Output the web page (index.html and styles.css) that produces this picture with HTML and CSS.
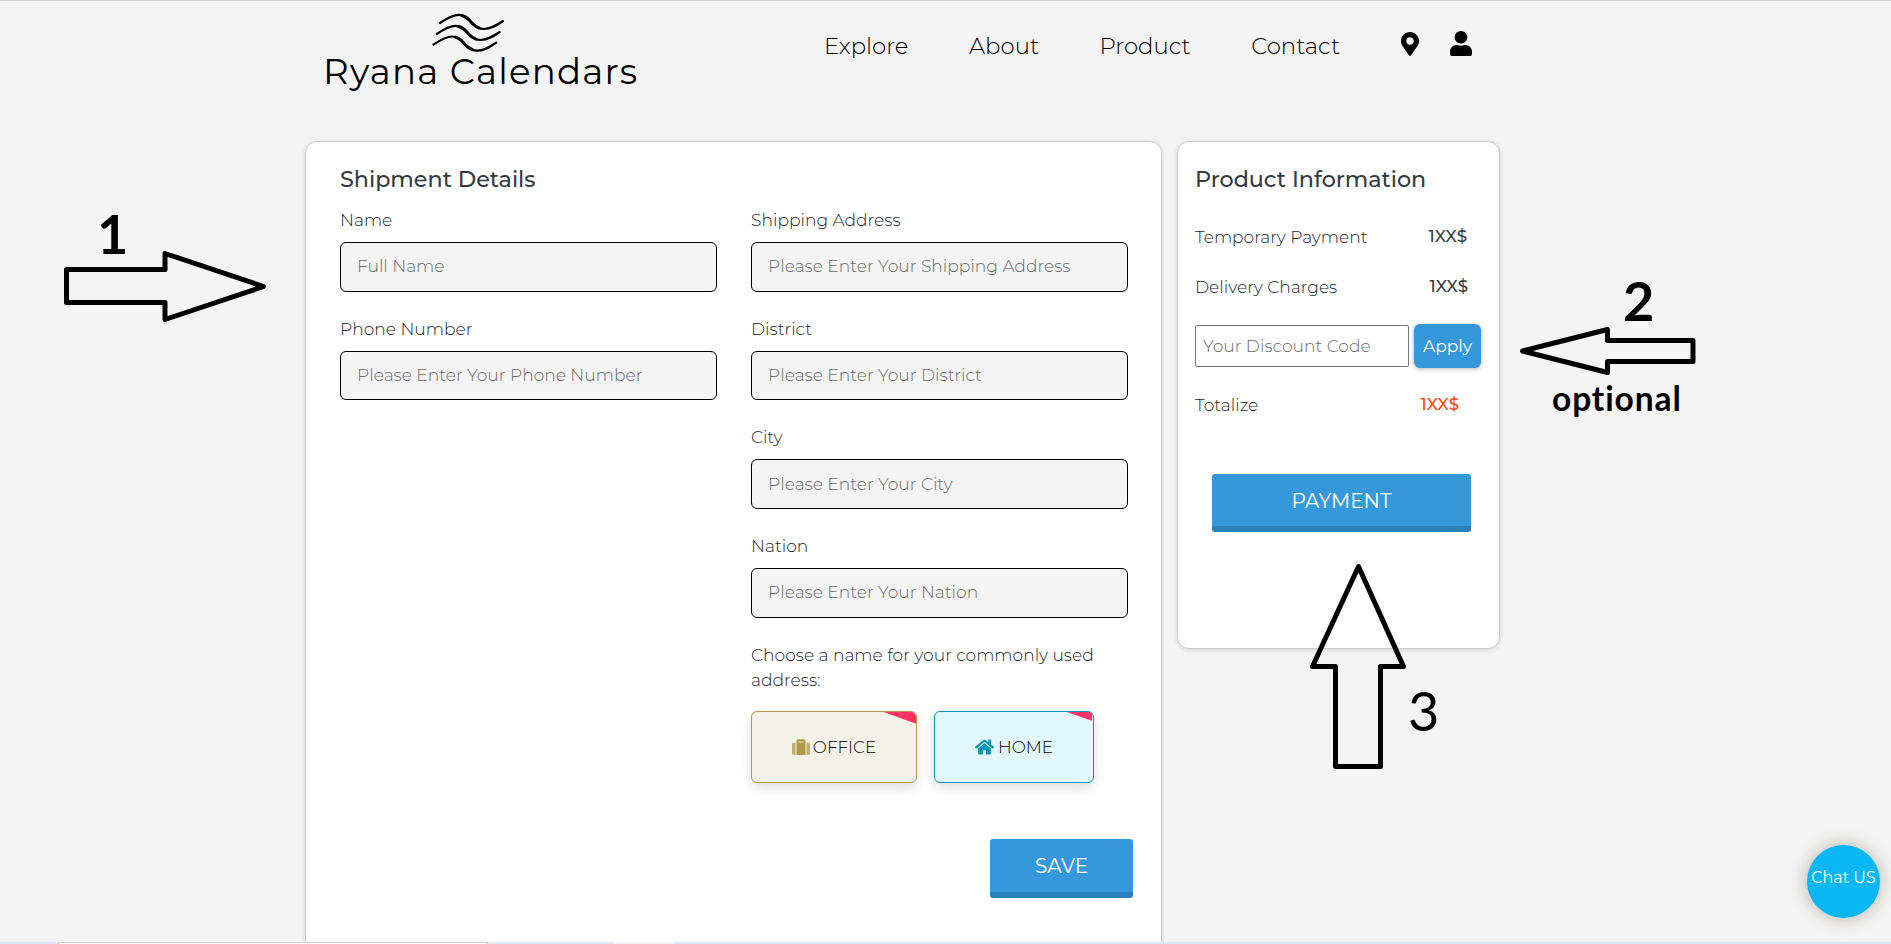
FILE: index.html
```
<!DOCTYPE html>
<html lang="en">
<head>
<meta charset="utf-8">
<title>Ryana Calendars - Shipment</title>
<link rel="stylesheet" href="styles.css">
</head>
<body>
<div class="page">
  <header class="header">
    <a class="logo">
      <svg class="logo-waves" width="74" height="42" viewBox="0 0 74 42">
        <defs>
          <g id="wave" fill="none" stroke="#000" stroke-linecap="round">
            <path stroke-width="2.200" d="M8 10C16 4.500 22 1.800 27 1.800C34 1.800 37 6.500 39.500 9.500C43 13.500 47 16 52 16C59 16 65 12 71 8"/>
            <path stroke-width="2.900" d="M30 2.500C35 4 37 6.500 39.500 9.500C42 12.500 44 14 47 15"/>
          </g>
        </defs>
        <use href="#wave"/>
        <use href="#wave" x="-3.300" y="11"/>
        <use href="#wave" x="-6.600" y="21.700"/>
      </svg>
      <span class="logo-name">Ryana Calendars</span>
    </a>
    <nav class="nav">
      <a>Explore</a><a>About</a><a>Product</a><a>Contact</a>
    </nav>
    <div class="header-icons">
      <svg width="18" height="24" viewBox="0 0 384 512"><path d="M172.300 501.700C27 291 0 269.400 0 192 0 86 86 0 192 0s192 86 192 192c0 77.400-27 99-172.300 309.700-9.500 13.800-29.900 13.800-39.400 0zM192 272c44.200 0 80-35.800 80-80s-35.800-80-80-80-80 35.800-80 80 35.800 80 80 80z"/></svg>
      <svg width="22" height="25" viewBox="0 0 448 512" preserveAspectRatio="none"><path d="M224 256c70.700 0 128-57.300 128-128S294.700 0 224 0 96 57.300 96 128s57.300 128 128 128zm89.600 32h-16.700c-22.200 10.200-46.900 16-72.900 16s-50.600-5.800-72.900-16h-16.700C60.200 288 0 348.200 0 422.400V464c0 26.500 21.500 48 48 48h352c26.500 0 48-21.500 48-48v-41.600c0-74.200-60.200-134.400-134.400-134.400z"/></svg>
    </div>
  </header>

  <main class="main">
    <section class="card shipment">
      <h2 class="title">Shipment Details</h2>
      <div class="columns">
        <div class="column">
          <label class="field"><span>Name</span><input class="input" placeholder="Full Name"></label>
          <label class="field"><span>Phone Number</span><input class="input" placeholder="Please Enter Your Phone Number"></label>
        </div>
        <div class="column">
          <label class="field"><span>Shipping Address</span><input class="input" placeholder="Please Enter Your Shipping Address"></label>
          <label class="field"><span>District</span><input class="input" placeholder="Please Enter Your District"></label>
          <label class="field"><span>City</span><input class="input" placeholder="Please Enter Your City"></label>
          <label class="field"><span>Nation</span><input class="input" placeholder="Please Enter Your Nation"></label>
          <div class="place">
            <p class="place-text">Choose a name for your commonly used address:</p>
            <div class="place-options">
              <button class="option office">
                <svg width="18" height="16" viewBox="0 0 512 448"><path fill-rule="evenodd" d="M128 448V48c0-26.500 21.500-48 48-48H336c26.500 0 48 21.500 48 48v400zM192 64v32h128V64z"/><path opacity=".75" d="M48 96h52v352H48c-26.500 0-48-21.500-48-48V144c0-26.500 21.500-48 48-48zM412 96h52c26.500 0 48 21.500 48 48v256c0 26.500-21.500 48-48 48h-52z"/></svg>
                OFFICE
              </button>
              <button class="option home">
                <svg width="19" height="16" viewBox="0 0 576 480"><path d="M280.400 132.300L96 284.100V448a16 16 0 0 0 16 16l112-.300a16 16 0 0 0 16-16V352a16 16 0 0 1 16-16h64a16 16 0 0 1 16 16v95.600a16 16 0 0 0 16 16.100L464 464a16 16 0 0 0 16-16V284L295.700 132.300a12.200 12.200 0 0 0-15.300 0zM571.600 235.500L488 166.600V28a12 12 0 0 0-12-12h-56a12 12 0 0 0-12 12v72.600L318.500 27a48 48 0 0 0-61 0L4.300 235.500a12 12 0 0 0-1.600 16.900l25.500 31A12 12 0 0 0 45.200 285L280.400 91.200a12.200 12.200 0 0 1 15.300 0L530.900 285a12 12 0 0 0 16.900-1.600l25.500-31a12 12 0 0 0-1.700-16.900z"/></svg>
                HOME
              </button>
            </div>
          </div>
        </div>
      </div>
      <button class="button save">SAVE</button>
    </section>

    <aside class="card product">
      <h2 class="title">Product Information</h2>
      <div class="row row-temporary"><span>Temporary Payment</span><b>1XX$</b></div>
      <div class="row row-delivery"><span>Delivery Charges</span><b>1XX$</b></div>
      <div class="discount"><input class="code" placeholder="Your Discount Code"><button class="apply">Apply</button></div>
      <div class="row row-total"><span>Totalize</span><b>1XX$</b></div>
      <button class="button payment">PAYMENT</button>
    </aside>
  </main>

  <svg class="arrows" width="1891" height="944" viewBox="0 0 1891 944">
    <g fill="none" stroke="#000" stroke-width="5" stroke-linejoin="round">
      <path d="M66.500 269.500H165V253.500L263.500 286.500L165 319.500V302.500H66.500Z"/>
      <path d="M1522.500 351L1607.500 329.500V340.500H1693V361.500H1607.500V372.500Z"/>
      <path d="M1358.500 566.500L1312.500 666.500H1335.500V766.500H1380.500V666.500H1403.500Z"/>
    </g>
  </svg>
  <span class="note note-one">1</span>
  <span class="note note-two">2</span>
  <span class="note note-optional">optional</span>
  <span class="note note-three">3</span>

  <button class="chat">Chat US</button>
  <div class="taskbar"><span class="taskbar-tab"></span><span class="taskbar-item"></span></div>
</div>
</body>
</html>
```
FILE: styles.css
```
* { box-sizing: border-box; }

body {
  margin: 0;
  background: #f4f4f4;
  color: #212529;
  font: 300 17.1px/25px Montserrat, "Open Sans", sans-serif;
}

button, input { font: inherit; margin: 0; }

.page {
  position: relative;
  width: 1891px;
  height: 944px;
  overflow: hidden;
  border-top: 1px solid #ccc;
}

/* Header */
.header {
  display: flex;
  align-items: flex-start;
  height: 140px;
  padding-left: 323px;
  color: #000;
}

.logo {
  display: flex;
  flex-direction: column;
  width: 316px;
  padding-top: 12px;
}

.logo-waves { margin-left: 109px; overflow: visible; }

.logo-name {
  margin-top: -3px;
  font-size: 35.6px;
  font-weight: 400;
  line-height: 40px;
  letter-spacing: 1.2px;
  white-space: nowrap;
}

.nav {
  display: flex;
  gap: 60.6px;
  padding: 30px 0 0 185px;
  font-size: 22.8px;
  line-height: 30px;
}

.header-icons {
  display: flex;
  align-items: center;
  gap: 31px;
  padding: 30px 0 0 61px;
}

/* Cards */
.main {
  display: flex;
  align-items: flex-start;
  gap: 15px;
  padding-left: 305px;
}

.card {
  border: 1px solid #ccc;
  border-radius: 12px;
  background: #fff;
  box-shadow: 0 1px 5px rgba(0, 0, 0, .14);
}

.shipment {
  width: 857px;
  height: 900px;
  padding: 21px 33px 0 34px;
}

.product {
  width: 323px;
  height: 508px;
  padding: 21px 17px 0;
}

.title {
  margin: 0;
  color: #343a40;
  font-size: 22.25px;
  font-weight: 500;
  line-height: 32px;
}

/* Shipment form */
.columns {
  display: flex;
  gap: 34px;
  padding-top: 12px;
}

.column {
  display: flex;
  flex-direction: column;
  gap: 24px;
  width: 377px;
}

.field {
  display: flex;
  flex-direction: column;
  gap: 10px;
}

.input {
  width: 100%;
  height: 49.7px;
  padding: 0 16px 2px;
  border: 1px solid #000;
  border-radius: 6px;
  background: #f4f4f4;
}

.input::placeholder, .code::placeholder { color: #6a6a6a; opacity: 1; }

.place-text { margin: 0 0 19px; }

.place-options { display: flex; gap: 17px; }

.option {
  position: relative;
  display: flex;
  align-items: center;
  justify-content: center;
  height: 72px;
  padding: 1px 0 0;
  border: 1px solid;
  border-radius: 6px;
  overflow: hidden;
  box-shadow: 0 5px 12px rgba(0, 0, 0, .13);
  color: #000;
  font-size: 16.8px;
}

.option svg { margin-right: 3px; }

.option::after {
  content: "";
  position: absolute;
  top: 0;
  right: 0;
  background: #ff3366;
  clip-path: polygon(0 0, 100% 0, 100% 100%);
}

.office { width: 166px; border-color: #af984c; background: #f4f1e8; }
.office svg { fill: #af984c; }
.office::after { width: 33px; height: 12px; }

.home { width: 160px; border-color: #0095b7; background: #e1f8ff; }
.home svg { margin-right: 4px; fill: #0095b7; }
.home::after { right: 1px; width: 26px; height: 9px; }

.button {
  display: block;
  padding: 2px 0 0;
  border: 0;
  border-bottom: 6px solid #2980b9;
  border-radius: 3px;
  background: #3498db;
  color: #fff;
  font-size: 20.1px;
  font-weight: 400;
}

.save {
  width: 143px;
  height: 59px;
  margin: 56px 0 0 650px;
}

/* Product card */
.row {
  display: flex;
  justify-content: space-between;
}

.row b { color: #343a40; font-size: 16.7px; font-weight: 500; }
.row-temporary { padding: 29px 15px 0 0; }
.row-delivery { padding: 25px 14px 0 0; }
.row-total { padding: 24px 23px 0 0; }
.row-total b { color: #ff4500; }

.discount {
  display: flex;
  align-items: center;
  gap: 5px;
  padding-top: 25px;
}

.code {
  width: 214px;
  height: 42px;
  padding: 0 7px 2px;
  border: 1px solid #767676;
  border-radius: 2px;
}

.apply {
  width: 67px;
  height: 44px;
  padding: 0 0 1px;
  border: 0;
  border-radius: 6px;
  background: #3498db;
  box-shadow: 0 1px 4px rgba(0, 0, 0, .3);
  color: #fff;
  font-weight: 400;
}

.payment {
  width: 259px;
  height: 58px;
  margin: 57px 0 0 17px;
}

/* Drawn annotations over the page */
.arrows { position: absolute; left: 0; top: -1px; }

.note {
  position: absolute;
  color: #000;
  font: 700 54px/60px Lato, sans-serif;
}

.note-one { left: 97px; top: 203px; }
.note-two { left: 1623px; top: 270px; }
.note-three { left: 1408px; top: 680px; font-weight: 400; }

.note-optional {
  left: 1552px;
  top: 377px;
  font-size: 33.5px;
  font-variant-ligatures: none;
  letter-spacing: .9px;
  line-height: 40px;
}

.chat {
  position: absolute;
  left: 1807px;
  top: 844px;
  width: 73px;
  height: 73px;
  padding: 0 0 8px;
  border: 0;
  border-radius: 50%;
  background: #08b7f3;
  box-shadow: 0 0 18px rgba(60, 50, 20, .35);
  color: #fff;
  font-size: 15.9px;
  font-weight: 400;
  white-space: nowrap;
}

.taskbar {
  position: absolute;
  left: 0;
  right: 0;
  bottom: 0;
  display: flex;
  height: 2px;
  padding-left: 58px;
  background: #e1e7f1;
}

.taskbar-tab {
  width: 430px;
  border: 1px solid #ccc;
  border-bottom: 0;
  background: #fff;
}

.taskbar-item {
  width: 61px;
  margin-left: 126px;
  background: #f0f2f6;
}
```
